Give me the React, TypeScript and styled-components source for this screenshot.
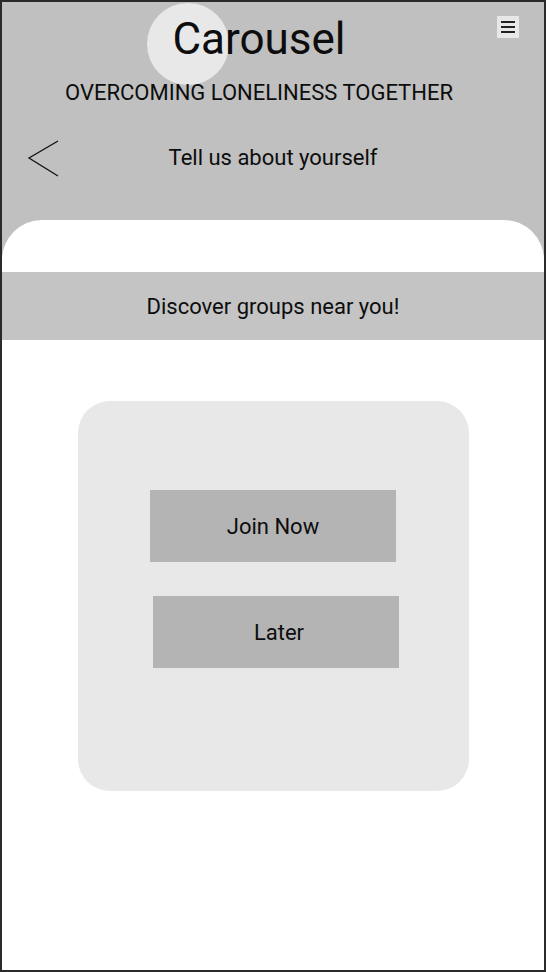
import styled, { createGlobalStyle } from "styled-components"

const GlobalStyle = createGlobalStyle`
	* {
		box-sizing: border-box;
	}
	html,
	body {
		margin: 0;
		padding: 0;
		background: #ffffff;
		font-family: Roboto, "Liberation Sans", sans-serif;
		color: #0d0d0d;
	}
`

const Screen = styled.div`
	display: flex;
	flex-direction: column;
	width: 546px;
	height: 972px;
	border: 2px solid #2a2a2a;
	background-color: #c0c0c0;
	overflow: hidden;
`

const Header = styled.header`
	position: relative;
	height: 218px;
	padding-top: 11px;
`

const Bubble = styled.div`
	position: absolute;
	left: 145px;
	top: 1px;
	width: 82px;
	height: 82px;
	border-radius: 50%;
	background-color: #e8e8e8;
`

const TitleBlock = styled.div`
	position: relative;
	padding-right: 28px;
	text-align: center;
`

const Title = styled.h1`
	margin: 0;
	font-size: 44px;
	font-weight: 400;
	line-height: 52px;
`

const Tagline = styled.div`
	margin-top: 15px;
	font-size: 22px;
	line-height: 26px;
	text-transform: uppercase;
`

const MenuButton = styled.button`
	position: absolute;
	top: 14px;
	right: 25px;
	display: flex;
	flex-direction: column;
	justify-content: center;
	gap: 3px;
	width: 22px;
	height: 22px;
	padding: 0 4px;
	border: none;
	background-color: #e8e8e8;
`

const MenuLine = styled.span`
	display: block;
	height: 2px;
	background-color: #222222;
`

const NavRow = styled.div`
	position: relative;
	display: flex;
	align-items: center;
	justify-content: center;
	height: 40px;
	margin-top: 32px;
`

const BackButton = styled.button`
	position: absolute;
	left: 24px;
	top: 2px;
	padding: 0;
	border: none;
	background: none;
	display: flex;
`

const NavTitle = styled.div`
	font-size: 22px;
	line-height: 26px;
`

const Sheet = styled.main`
	flex: 1;
	padding-top: 52px;
	background-color: #ffffff;
	border-radius: 40px 40px 0 0;
`

const Banner = styled.div`
	display: flex;
	align-items: center;
	justify-content: center;
	height: 68px;
	background-color: #c4c4c4;
	font-size: 22px;
`

const Card = styled.section`
	display: flex;
	flex-direction: column;
	align-items: center;
	gap: 34px;
	width: 391px;
	height: 390px;
	margin: 61px auto 0;
	padding-top: 89px;
	border-radius: 32px;
	background-color: #e8e8e8;
`

const ActionButton = styled.button<{ $shift?: number }>`
	width: 246px;
	height: 72px;
	margin-left: ${(p) => (p.$shift ?? 0) * 2}px;
	padding: 0 0 0 ${(p) => (p.$shift ?? 0) * 2}px;
	border: none;
	background-color: #b4b4b4;
	font-family: Roboto, "Liberation Sans", sans-serif;
	font-size: 22px;
	color: #0d0d0d;
`

export default function App() {
	return (
		<>
			<GlobalStyle />
			<Screen>
				<Header>
					<Bubble />
					<TitleBlock>
						<Title>Carousel</Title>
						<Tagline>Overcoming loneliness together</Tagline>
					</TitleBlock>
					<MenuButton aria-label="Menu">
						<MenuLine />
						<MenuLine />
						<MenuLine />
					</MenuButton>
					<NavRow>
						<BackButton aria-label="Back">
							<svg width="34" height="40" viewBox="0 0 34 40">
								<polyline points="32,1 3,18 32,36" fill="none" stroke="#111" strokeWidth="1.3" />
							</svg>
						</BackButton>
						<NavTitle>Tell us about yourself</NavTitle>
					</NavRow>
				</Header>
				<Sheet>
					<Banner>Discover groups near you!</Banner>
					<Card>
						<ActionButton>Join Now</ActionButton>
						<ActionButton $shift={3}>Later</ActionButton>
					</Card>
				</Sheet>
			</Screen>
		</>
	)
}
